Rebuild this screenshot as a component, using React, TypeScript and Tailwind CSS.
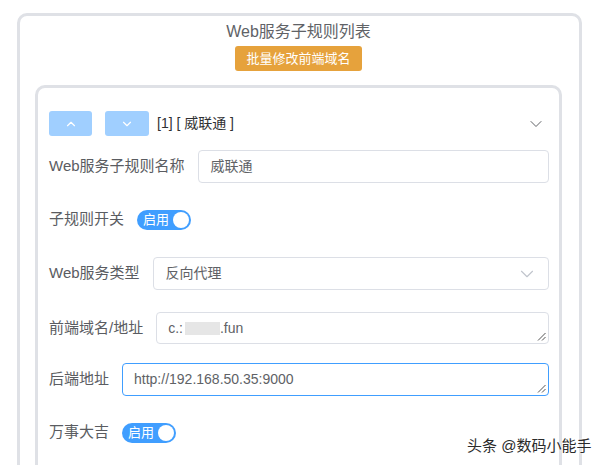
import { ChevronDown, ChevronUp } from 'lucide-react';

// handle drawn like the browser's textarea resize grip
function ResizeGrip() {
    return (
        <svg className="absolute right-[2px] bottom-[2px]" width="9" height="9" viewBox="0 0 9 9">
            <line x1="8.5" y1="1" x2="1" y2="8.5" stroke="#555" strokeWidth="1" />
            <line x1="8.5" y1="5" x2="5" y2="8.5" stroke="#555" strokeWidth="1" />
        </svg>
    );
}

function Switch() {
    return (
        <div className="relative flex items-center w-[54px] h-[20px] rounded-full bg-[#409eff]">
            <span className="pl-[6px] text-[13px] leading-none text-white">启用</span>
            <span className="absolute right-[2px] top-[2px] w-[16px] h-[16px] rounded-full bg-white" />
        </div>
    );
}

function Label({ children }: { children: React.ReactNode }) {
    return <span className="shrink-0 text-[15px] text-[#5a5c61]">{children}</span>;
}

export default function App() {
    return (
        <div
            className="relative h-[465px] overflow-hidden bg-white pl-[17px] pt-[13px]"
            style={{ fontFamily: '"Liberation Sans", "Noto Sans CJK SC", sans-serif' }}
        >
            {/* khung ngoài */}
            <div className="w-[565px] rounded-[10px] border-[3px] border-[#dfe1e6] pt-[5px] pl-[15px] pr-[17px] pb-10">
                <div className="flex flex-col items-center">
                    <h2 className="text-[16px] leading-[22px] text-[#606266]">Web服务子规则列表</h2>
                    <button className="mt-[3px] h-[25px] w-[127px] rounded-[3px] bg-[#e6a23c] text-[13px] text-white">
                        批量修改前端域名
                    </button>
                </div>

                {/* thẻ quy tắc con */}
                <div className="mt-[14px] rounded-[10px] border-[3px] border-[#dfe1e6] pt-[23px] pl-[11px] pr-[10px] pb-10">
                    <div className="flex items-center h-[25px] mb-[14px]">
                        <button className="flex items-center justify-center w-[43px] h-[25px] rounded-[3px] bg-[#a0cfff]">
                            <ChevronUp className="w-[14px] h-[14px] text-white" strokeWidth={2} />
                        </button>
                        <button className="ml-[13px] flex items-center justify-center w-[44px] h-[25px] rounded-[3px] bg-[#a0cfff]">
                            <ChevronDown className="w-[14px] h-[14px] text-white" strokeWidth={2} />
                        </button>
                        <span className="ml-[8px] text-[14px] text-[#303133]">[1] [ 威联通 ]</span>
                        <ChevronDown className="ml-auto mr-[3px] w-[20px] h-[20px] text-[#606266]" strokeWidth={1.2} />
                    </div>

                    <div className="flex items-center gap-[13px]">
                        <Label>Web服务子规则名称</Label>
                        <div className="flex-1 flex items-center h-[33px] rounded-[4px] border border-[#dcdfe6] px-[12px] text-[14px] text-[#606266]">
                            威联通
                        </div>
                    </div>

                    <div className="mt-[20px] flex items-center gap-[13px] h-[33px]">
                        <Label>子规则开关</Label>
                        <Switch />
                    </div>

                    <div className="mt-[21px] flex items-center gap-[13px]">
                        <Label>Web服务类型</Label>
                        <div className="flex-1 flex items-center h-[33px] rounded-[4px] border border-[#dcdfe6] pl-[12px] pr-[10px] text-[14px] text-[#606266]">
                            <span>反向代理</span>
                            <ChevronDown className="ml-auto w-[22px] h-[22px] text-[#c0c4cc]" strokeWidth={1.2} />
                        </div>
                    </div>

                    <div className="mt-[22px] flex items-center gap-[13px]">
                        <Label>前端域名/地址</Label>
                        <div className="relative flex-1 flex items-center h-[32px] rounded-[4px] border border-[#dcdfe6] px-[11px] text-[14px] text-[#606266]">
                            <span>c.:</span>
                            <span className="ml-[2px] w-[35px] h-[13px] bg-[#e6e6e6]" />
                            <span>.fun</span>
                            <ResizeGrip />
                        </div>
                    </div>

                    <div className="mt-[19px] flex items-center gap-[13px]">
                        <Label>后端地址</Label>
                        <div className="relative flex-1 flex items-center h-[33px] rounded-[4px] border border-[#409eff] px-[11px] text-[14px] text-[#606266]">
                            http://192.168.50.35:9000
                            <ResizeGrip />
                        </div>
                    </div>

                    <div className="mt-[20px] flex items-center gap-[13px] h-[33px]">
                        <Label>万事大吉</Label>
                        <Switch />
                    </div>
                </div>
            </div>

            {/* watermark */}
            <span className="absolute left-[467px] top-[435px] text-[15px] text-[#2b2b2b] [text-shadow:0_0_2px_#fff,0_0_2px_#fff]">
                头条 @数码小能手
            </span>
        </div>
    );
}
